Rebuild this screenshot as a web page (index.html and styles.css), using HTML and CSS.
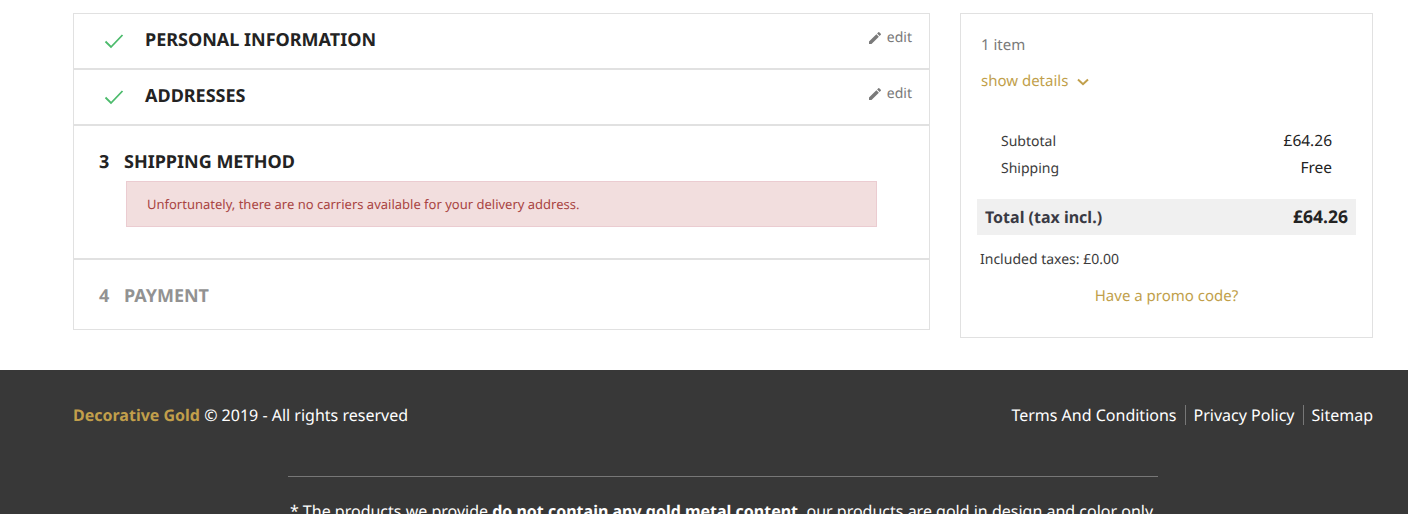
FILE: index.html
```html
<!DOCTYPE html>
<html lang="en">
<head>
    <meta charset="UTF-8">
    <meta name="viewport" content="width=device-width, initial-scale=1.0">
    <title>Checkout</title>
    <link rel="stylesheet" href="styles.css">
</head>
<body>
    <div class="checkout">
        <div class="steps">
            <section class="step step-done">
                <svg class="check-icon" viewBox="0 0 20 16" width="20" height="16"><path d="M1.5 8.5 L7 14 L18.5 2" fill="none" stroke="#4cbb6c" stroke-width="1.8"/></svg>
                <h1 class="step-title">PERSONAL INFORMATION</h1>
                <a class="edit-link" href="#">
                    <svg class="edit-icon" viewBox="0 0 24 24" width="16" height="16"><path d="M3 17.25V21h3.75L17.81 9.94l-3.75-3.75L3 17.25zM20.71 7.04a1 1 0 0 0 0-1.41l-2.34-2.34a1 1 0 0 0-1.41 0l-1.83 1.83 3.75 3.75 1.83-1.83z" fill="#7a7a7a"/></svg>
                    edit
                </a>
            </section>
            <section class="step step-done">
                <svg class="check-icon" viewBox="0 0 20 16" width="20" height="16"><path d="M1.5 8.5 L7 14 L18.5 2" fill="none" stroke="#4cbb6c" stroke-width="1.8"/></svg>
                <h1 class="step-title">ADDRESSES</h1>
                <a class="edit-link" href="#">
                    <svg class="edit-icon" viewBox="0 0 24 24" width="16" height="16"><path d="M3 17.25V21h3.75L17.81 9.94l-3.75-3.75L3 17.25zM20.71 7.04a1 1 0 0 0 0-1.41l-2.34-2.34a1 1 0 0 0-1.41 0l-1.83 1.83 3.75 3.75 1.83-1.83z" fill="#7a7a7a"/></svg>
                    edit
                </a>
            </section>
            <section class="step step-current">
                <h1 class="step-title"><span class="step-number">3</span>SHIPPING METHOD</h1>
                <div class="alert">Unfortunately, there are no carriers available for your delivery address.</div>
            </section>
            <section class="step step-todo">
                <h1 class="step-title"><span class="step-number">4</span>PAYMENT</h1>
            </section>
        </div>

        <aside class="summary">
            <p class="item-count">1 item</p>
            <a class="show-details" href="#">show details
                <svg viewBox="0 0 12 8" width="12" height="8"><path d="M1 1.5 L6 6.2 L11 1.5" fill="none" stroke="#c19f4b" stroke-width="2"/></svg>
            </a>
            <div class="lines">
                <div class="line"><span class="line-label">Subtotal</span><span>£64.26</span></div>
                <div class="line"><span class="line-label">Shipping</span><span>Free</span></div>
            </div>
            <div class="total"><span class="total-label">Total (tax incl.)</span><span class="total-value">£64.26</span></div>
            <p class="taxes">Included taxes: £0.00</p>
            <a class="promo" href="#">Have a promo code?</a>
        </aside>
    </div>

    <footer class="footer">
        <div class="footer-top">
            <p class="copyright"><strong>Decorative Gold</strong> © 2019 - All rights reserved</p>
            <nav class="footer-links">
                <a href="#">Terms And Conditions</a>
                <a href="#">Privacy Policy</a>
                <a href="#">Sitemap</a>
            </nav>
        </div>
        <div class="disclaimer">
            <p>* The products we provide <strong>do not contain any gold metal content</strong>, our products are gold in design and color only</p>
        </div>
    </footer>
</body>
</html>
```

FILE: styles.css
```css
html, body {
    height: 514px;
    overflow: hidden;
}
body {
    margin: 0;
    font-family: "Noto Sans", sans-serif;
    text-rendering: geometricPrecision;
    background-color: white;
    color: #232323;
}
a {
    text-decoration: none;
}
p {
    margin: 0;
}
.checkout {
    display: flex;
    justify-content: space-between;
    align-items: flex-start;
    width: 1300px;
    margin-left: 73px;
    padding-top: 13px;
    height: 370px;
    box-sizing: border-box;
}
.steps {
    width: 857px;
}
.step {
    border: 1px solid #e1e1e1;
    box-sizing: border-box;
    background-color: white;
}
.step-title {
    margin: 0;
    font-size: 18px;
    font-weight: 700;
    line-height: 24px;
    color: #232323;
}
.step-done {
    display: flex;
    align-items: center;
    height: 56px;
    padding: 0 17px 2px 30px;
}
.check-icon {
    margin-right: 21px;
    margin-top: 2px;
}
.edit-link {
    margin-left: auto;
    margin-top: -5px;
    display: flex;
    align-items: center;
    gap: 4px;
    font-size: 14px;
    color: #7a7a7a;
}
.step-number {
    display: inline-block;
    width: 25px;
}
.step-current {
    height: 134px;
    padding: 24px 52px 0 25px;
}
.alert {
    margin: 7px 0 0 27px;
    height: 46px;
    box-sizing: border-box;
    padding: 13px 20px;
    font-size: 13px;
    line-height: 19px;
    color: #a94442;
    background-color: #f2dede;
    border: 1px solid #ebccd1;
}
.step-todo {
    height: 71px;
    padding: 24px 25px 0;
}
.step-todo .step-title {
    color: #929292;
}
.summary {
    width: 413px;
    height: 325px;
    box-sizing: border-box;
    border: 1px solid #e1e1e1;
    padding: 21px 16px 0 20px;
}
.item-count {
    font-size: 15px;
    line-height: 20px;
    color: #7a7a7a;
}
.show-details {
    display: flex;
    align-items: center;
    gap: 9px;
    margin-top: 16px;
    font-size: 15px;
    line-height: 20px;
    color: #c19f4b;
}
.show-details svg {
    margin-top: 2px;
}
.lines {
    margin-top: 36px;
    padding: 0 24px 0 20px;
}
.line {
    display: flex;
    justify-content: space-between;
    align-items: baseline;
    height: 27px;
    line-height: 27px;
    font-size: 15.5px;
}
.line-label {
    font-size: 14px;
    color: #3c3c3c;
}
.total {
    display: flex;
    justify-content: space-between;
    align-items: center;
    height: 36px;
    margin: 18px 0 0 -4px;
    padding: 0 8px;
    background-color: #f0f0f0;
}
.total-label {
    font-size: 16px;
    font-weight: 700;
    color: #3a3a44;
}
.total-value {
    font-size: 17.5px;
    font-weight: 700;
}
.taxes {
    margin: 15px 0 0 -1px;
    font-size: 14px;
    line-height: 20px;
    color: #3c3c3c;
}
.promo {
    display: block;
    margin-top: 16px;
    margin-left: -4px;
    text-align: center;
    font-size: 15px;
    line-height: 20px;
    color: #c19f4b;
}
.footer {
    background-color: #383838;
    color: white;
    height: 144px;
    padding: 0 35px 0 73px;
    font-size: 16px;
}
.footer-top {
    display: flex;
    justify-content: space-between;
    align-items: center;
    padding-top: 34px;
    line-height: 22px;
}
.copyright strong {
    color: #c19f4b;
}
.footer-links {
    display: flex;
}
.footer-links a {
    color: white;
    padding: 0 8px;
    border-left: 1px solid #777;
    line-height: 20px;
}
.footer-links a:first-child {
    border-left: none;
}
.footer-links a:last-child {
    padding-right: 0;
}
.disclaimer {
    width: 870px;
    margin: 50px 0 0 215px;
    padding-top: 23px;
    border-top: 1px solid #777;
    text-align: center;
    white-space: nowrap;
}
.disclaimer p {
    padding-right: 3px;
}
```
